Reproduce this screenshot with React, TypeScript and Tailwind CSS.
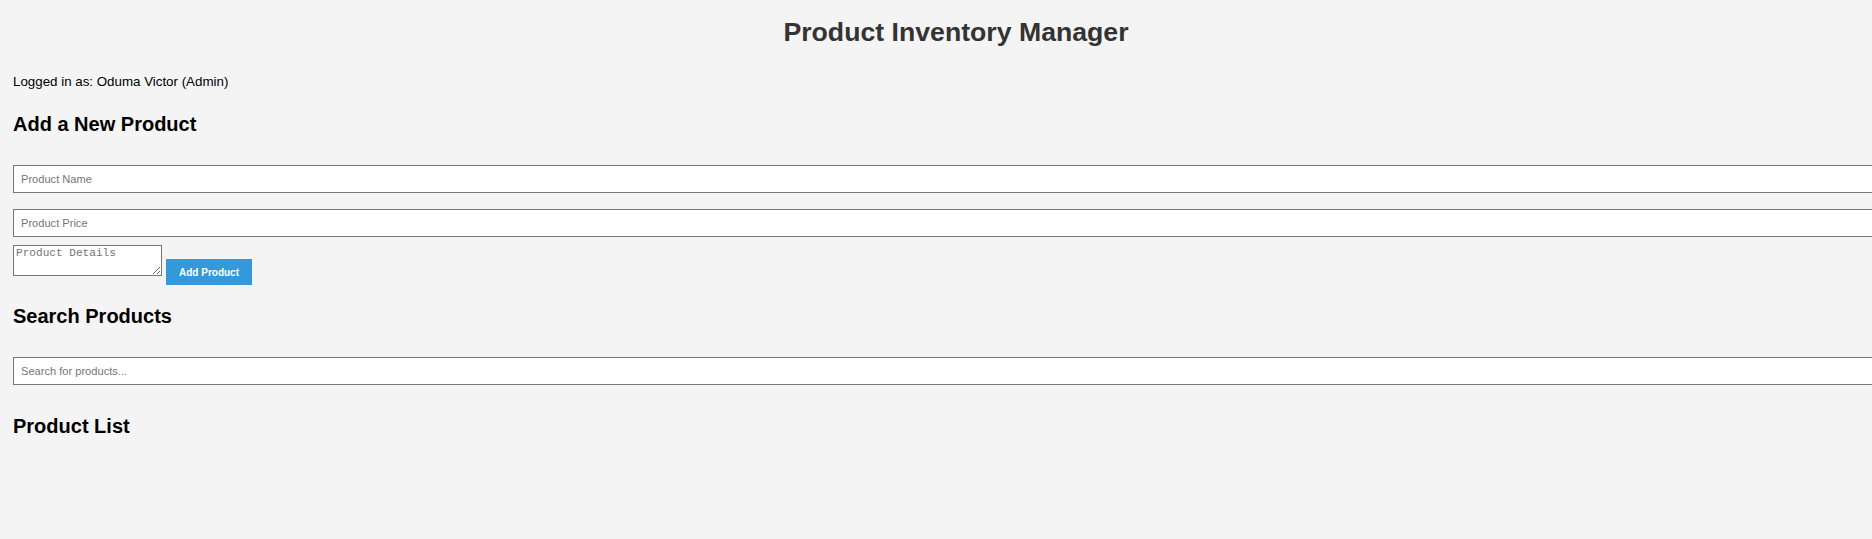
import React from "react";

export default function App() {
  return (
    <div className="h-screen w-full overflow-hidden bg-[#f4f4f4] px-[13px] font-['Liberation_Sans',Arial,sans-serif] text-black">
      <h1 className="pt-[17px] pl-[40px] text-center text-[26.67px] font-bold leading-[31px] text-[#333]">
        Product Inventory Manager
      </h1>
      <p className="mt-[26px] text-[13.33px] leading-[15.33px]">Logged in as: Oduma Victor (Admin)</p>

      <h2 className="mt-[24px] text-[20px] font-bold leading-[23px]">Add a New Product</h2>
      <input
        type="text"
        placeholder="Product Name"
        className="mt-[29px] block h-[28px] w-[1900px] max-w-none border border-[#767676] bg-white px-[7px] text-[11.1px] font-['Liberation_Sans',Arial,sans-serif] placeholder:text-[#757575] outline-none"
      />
      <input
        type="text"
        placeholder="Product Price"
        className="mt-[16px] block h-[28px] w-[1900px] max-w-none border border-[#767676] bg-white px-[7px] text-[11.1px] font-['Liberation_Sans',Arial,sans-serif] placeholder:text-[#757575] outline-none"
      />
      <div className="mt-[8px] flex items-start gap-[4px]">
        <textarea
          placeholder="Product Details"
          className="block h-[31px] w-[149px] border border-[#767676] bg-white px-[2px] py-[1px] text-[11.1px] leading-[13px] font-['Liberation_Mono','DejaVu_Sans_Mono',monospace] placeholder:text-[#757575] outline-none"
        />
        <button className="mt-[14px] h-[26px] bg-[#3498db] px-[13px] text-[10px] font-bold text-white">
          Add Product
        </button>
      </div>

      <h2 className="mt-[20px] text-[20px] font-bold leading-[23px]">Search Products</h2>
      <input
        type="text"
        placeholder="Search for products..."
        className="mt-[29px] block h-[28px] w-[1900px] max-w-none border border-[#767676] bg-white px-[7px] text-[11.1px] font-['Liberation_Sans',Arial,sans-serif] placeholder:text-[#757575] outline-none"
      />

      <h2 className="mt-[30px] text-[20px] font-bold leading-[23px]">Product List</h2>
    </div>
  );
}
